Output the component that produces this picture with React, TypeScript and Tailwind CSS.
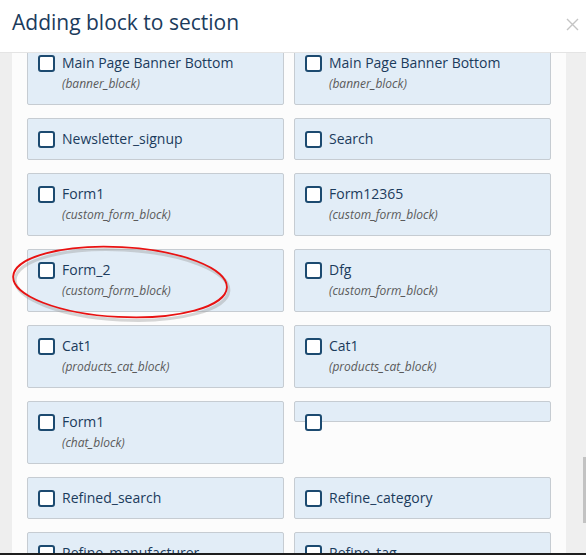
import React from 'react';

type Block = { title?: string; type?: string };

const rows: Block[][] = [
  [
    { title: 'Main Page Banner Bottom', type: 'banner_block' },
    { title: 'Main Page Banner Bottom', type: 'banner_block' },
  ],
  [{ title: 'Newsletter_signup' }, { title: 'Search' }],
  [
    { title: 'Form1', type: 'custom_form_block' },
    { title: 'Form12365', type: 'custom_form_block' },
  ],
  [
    { title: 'Form_2', type: 'custom_form_block' },
    { title: 'Dfg', type: 'custom_form_block' },
  ],
  [
    { title: 'Cat1', type: 'products_cat_block' },
    { title: 'Cat1', type: 'products_cat_block' },
  ],
  [{ title: 'Form1', type: 'chat_block' }, {}],
  [{ title: 'Refined_search' }, { title: 'Refine_category' }],
  [{ title: 'Refine_manufacturer' }, { title: 'Refine_tag' }],
];

const Checkbox = () => (
  <span className="block w-[17px] h-[17px] shrink-0 rounded-[3px] border-2 border-[#1c4a70] bg-white" />
);

const BlockCard = ({ block }: { block: Block }) => {
  if (!block.title) {
    // empty block: box collapses, the checkbox spills out below
    return (
      <div className="self-start h-[21px] rounded-[2px] border border-[#c6ccd2] bg-[#e2edf7] px-[10px] pt-[12px]">
        <Checkbox />
      </div>
    );
  }
  return (
    <div className="rounded-[2px] border border-[#c6ccd2] bg-[#e2edf7] px-[10px] py-[10px]">
      <label className="flex items-center gap-[7px] h-[20px]">
        <Checkbox />
        <span className="text-[14px] leading-[20px] text-[#1b3b5c]">{block.title}</span>
      </label>
      {block.type && (
        <div className="pl-[24px] text-[12px] leading-[21px] italic text-[#5a5a5a]">
          ({block.type})
        </div>
      )}
    </div>
  );
};

export default function App() {
  return (
    <div
      className="relative w-[586px] h-[555px] flex flex-col overflow-hidden bg-white"
      style={{ fontFamily: '"Open Sans", "Noto Sans", sans-serif' }}
    >
      <div className="h-[53px] shrink-0 flex items-start justify-between border-b border-[#e4e4e4] bg-white pl-[12px] pr-[7px] pt-[8px]">
        <h1 className="text-[21px] leading-[28px] text-[#1b3b5c]">Adding block to section</h1>
        <svg width="13" height="13" viewBox="0 0 13 13" className="mt-[10px]">
          <path d="M1 1 L12 12 M12 1 L1 12" stroke="#c4c4c4" strokeWidth="1.4" />
        </svg>
      </div>

      <div className="flex-1 flex min-h-0">
        <div className="w-[12px] bg-[#eeeeee]" />
        <div className="w-[554px] overflow-hidden bg-[#fcfcfc] px-[15px]">
          <div className="-mt-[11px] grid grid-cols-2 gap-x-[10px] gap-y-[13px] items-start">
            {rows.map((row, i) =>
              row.map((b, j) => <BlockCard key={`${i}-${j}`} block={b} />)
            )}
          </div>
        </div>
        <div className="relative w-[20px] bg-[#efefef]">
          <div className="absolute right-0 top-[404px] w-[3px] h-[66px] bg-[#c2c2c2]" />
        </div>
      </div>

      <div className="h-[2px] shrink-0 bg-[#1e1e1e]" />

      <svg className="absolute left-0 top-0 pointer-events-none" width="586" height="555">
        <ellipse cx="122" cy="285" rx="107" ry="35" fill="none" stroke="#9a9a9a" strokeOpacity="0.4" strokeWidth="3" transform="rotate(3 122 285)" />
        <ellipse cx="120" cy="282" rx="107" ry="35" fill="none" stroke="#e81212" strokeWidth="1.8" transform="rotate(3 120 282)" />
      </svg>
    </div>
  );
}
